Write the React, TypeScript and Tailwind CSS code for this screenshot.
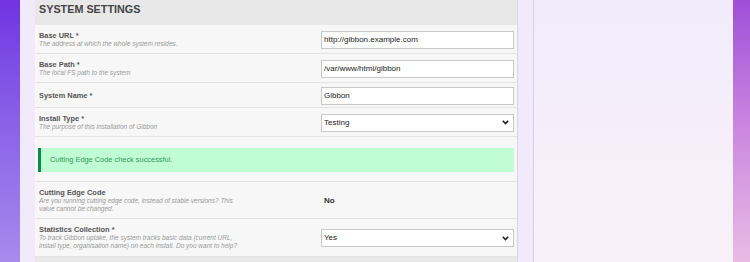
import React from "react"

const font = { fontFamily: '"Liberation Sans", Arial, sans-serif' }

function Label({ title, desc }: { title: string; desc?: string[] }) {
  return (
    <div className="w-[200px]">
      <div className="text-[7.4px] leading-[8px] font-bold text-[#555]">{title}</div>
      {desc?.map((line) => (
        <div key={line} className="text-[6.5px] leading-[8px] italic text-[#9a9a9a]">
          {line}
        </div>
      ))}
    </div>
  )
}

function TextBox({ value }: { value: string }) {
  return (
    <div className="w-[193px] h-[18px] border border-[#c9c9c9] bg-white flex items-center pl-[2px] text-[8px] text-[#222]">
      {value}
    </div>
  )
}

function SelectBox({ value }: { value: string }) {
  return (
    <div className="w-[193px] h-[18px] border border-[#c9c9c9] bg-white flex items-center justify-between pl-[2px] pr-[4px] text-[8px] text-[#222]">
      <span>{value}</span>
      <svg width="7" height="5" viewBox="0 0 7 5">
        <path d="M0.8 0.8 L3.5 3.6 L6.2 0.8" fill="none" stroke="#222" strokeWidth="1.6" />
      </svg>
    </div>
  )
}

function Row({ height, children }: { height: string; children: React.ReactNode }) {
  return (
    <div className={`${height} shrink-0 flex items-center justify-between pl-[4px] pr-[3px] pt-[1px] bg-[#f7f7f7] border-b border-[#e3e3e3]`}>
      {children}
    </div>
  )
}

export default function App() {
  return (
    <div className="w-[750px] h-[262px] overflow-hidden flex" style={font}>
      <div className="w-[20px] shrink-0 bg-linear-to-b from-[#7232e2] to-[#a88aec]" />
      <div className="w-[713px] shrink-0 flex bg-[#f1eafb]">
        <div className="w-[15px] shrink-0" />
        <div className="w-[483px] shrink-0 flex flex-col border-r border-[#d9d9d9] bg-[#f7f7f7]">
          <div className="h-[25px] shrink-0 bg-[#e8e8e8] pl-[4px] pt-[3px]">
            <div className="text-[10.8px] leading-[13px] font-bold text-[#444]">SYSTEM SETTINGS</div>
          </div>
          <Row height="h-[29px]">
            <Label title="Base URL *" desc={["The address at which the whole system resides."]} />
            <TextBox value="http://gibbon.example.com" />
          </Row>
          <Row height="h-[29px]">
            <Label title="Base Path *" desc={["The local FS path to the system"]} />
            <TextBox value="/var/www/html/gibbon" />
          </Row>
          <Row height="h-[25px]">
            <Label title="System Name *" />
            <TextBox value="Gibbon" />
          </Row>
          <Row height="h-[29px]">
            <Label title="Install Type *" desc={["The purpose of this installation of Gibbon"]} />
            <SelectBox value="Testing" />
          </Row>
          <div className="h-[45px] shrink-0 flex items-center px-[3px] pt-[1px] bg-[#f7f7f7] border-b border-[#e3e3e3]">
            <div className="w-full h-[24px] flex items-center bg-[#c0fcd4] border-l-[3px] border-[#0d8a4e] pl-[9px] text-[7.4px] text-[#2f9a5c]">
              Cutting Edge Code check successful.
            </div>
          </div>
          <Row height="h-[37px]">
            <Label
              title="Cutting Edge Code"
              desc={["Are you running cutting edge code, instead of stable versions? This", "value cannot be changed."]}
            />
            <div className="w-[193px] pl-[3px] text-[8px] font-bold text-[#333]">No</div>
          </Row>
          <Row height="h-[38px]">
            <Label
              title="Statistics Collection *"
              desc={[
                "To track Gibbon uptake, the system tracks basic data (current URL,",
                "install type, organisation name) on each install. Do you want to help?",
              ]}
            />
            <SelectBox value="Yes" />
          </Row>
          <div className="flex-1 bg-[#e8e8e8]" />
        </div>
        <div className="w-[15px] shrink-0" />
        <div className="w-[200px] shrink-0 border-l border-[#d8d0e2] bg-linear-to-b from-[#f2ebfb] to-[#f9f1f9]" />
      </div>
      <div className="w-[17px] shrink-0 bg-linear-to-b from-[#9f4ed8] via-[#cc88e0] to-[#e8bce4]" />
    </div>
  )
}
